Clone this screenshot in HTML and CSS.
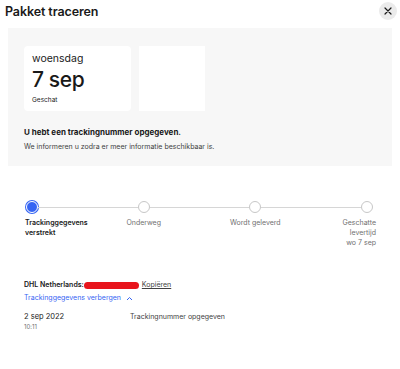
FILE: index.html
```html
<!DOCTYPE html>
<html>
<head>
<meta charset="utf-8">
<link rel="stylesheet" href="styles.css">
</head>
<body>
<div class="dialog">
  <header class="head">
    <h1 class="title">Pakket traceren</h1>
    <button class="close" aria-label="Sluiten">
      <svg width="8" height="8" viewBox="0 0 8 8"><path d="M1 1L7 7M7 1L1 7" stroke="#191919" stroke-width="1.2" stroke-linecap="round"/></svg>
    </button>
  </header>
  <section class="panel">
    <div class="cards">
      <div class="card card-date">
        <div class="day">woensdag</div>
        <div class="date">7 sep</div>
        <div class="est">Geschat</div>
      </div>
      <div class="card card-empty"></div>
    </div>
    <div class="status">U hebt een trackingnummer opgegeven.</div>
    <div class="info">We informeren u zodra er meer informatie beschikbaar is.</div>
  </section>
  <section class="stepper">
    <div class="step step-first">
      <span class="dot dot-active"></span>
      <span class="label label-active">Trackinggegevens<br>verstrekt</span>
    </div>
    <span class="line"></span>
    <div class="step">
      <span class="dot"></span>
      <span class="label">Onderweg</span>
    </div>
    <span class="line"></span>
    <div class="step">
      <span class="dot"></span>
      <span class="label">Wordt geleverd</span>
    </div>
    <span class="line"></span>
    <div class="step step-last">
      <span class="dot"></span>
      <span class="label">Geschatte<br>levertijd<br>wo 7 sep</span>
    </div>
  </section>
  <section class="tracking">
    <div class="carrier"><b>DHL Netherlands:</b><span class="redact"></span><a class="copy">Kopiëren</a></div>
    <a class="toggle">Trackinggegevens verbergen
      <svg width="7" height="5" viewBox="0 0 7 5"><path d="M1 4L3.5 1.5L6 4" fill="none" stroke="#3665f3" stroke-width="1"/></svg>
    </a>
    <div class="event">
      <div class="when">
        <div class="edate">2 sep 2022</div>
        <div class="etime">10:11</div>
      </div>
      <div class="what">Trackingnummer opgegeven</div>
    </div>
  </section>
</div>
</body>
</html>
```
FILE: styles.css
```css
* { box-sizing: border-box; }
html, body { margin: 0; padding: 0; background: #fff; }
body {
  width: 400px;
  height: 369px;
  overflow: hidden;
  font-family: Inter, "Noto Sans", sans-serif;
  color: #191919;
}
.head {
  height: 28px;
  display: flex;
  align-items: center;
  justify-content: space-between;
  padding: 0 3px 6px 5px;
}
.title {
  margin: 0;
  font-size: 12.5px;
  font-weight: 600;
  letter-spacing: -0.1px;
}
.close {
  width: 18px;
  height: 18px;
  border-radius: 50%;
  border: none;
  background: #ebebeb;
  padding: 0;
  display: flex;
  align-items: center;
  justify-content: center;
}
.panel {
  margin: 0 8px;
  height: 138px;
  background: #f7f7f7;
  padding: 18px 16px 0;
}
.cards {
  display: flex;
  gap: 8px;
}
.card {
  background: #fff;
  height: 65px;
}
.card-date {
  width: 107px;
  border-radius: 4px;
  padding: 6px 8px;
}
.card-empty { width: 66px; }
.day { font-size: 10.5px; line-height: 13px; }
.date { font-size: 21px; font-weight: 500; line-height: 26px; margin-top: 2px; letter-spacing: -0.4px; }
.est { font-size: 6.5px; line-height: 9px; margin-top: 3px; }
.status {
  margin-top: 16px;
  font-size: 8px;
  font-weight: 700;
  line-height: 11px;
}
.info {
  margin-top: 4px;
  font-size: 7px;
  line-height: 10px;
  color: #414141;
}
.stepper {
  display: flex;
  margin: 35px 27px 0 26px;
  height: 79px;
}
.step {
  width: 12px;
  flex: none;
  display: flex;
  flex-direction: column;
  align-items: center;
}
.step-first { align-items: flex-start; }
.step-last { align-items: flex-end; }
.dot {
  width: 12px;
  height: 12px;
  border-radius: 50%;
  border: 1px solid #c7c7c7;
  background: #fff;
  flex: none;
}
.dot-active {
  background: #3665f3;
  border: 1.5px solid #fff;
  box-shadow: 0 0 0 1px #3665f3;
}
.line {
  flex: 1;
  height: 1px;
  background: #d6d6d6;
  margin-top: 5.5px;
}
.label {
  margin-top: 5px;
  font-size: 7px;
  line-height: 10px;
  white-space: nowrap;
  color: #707070;
}
.step-first .label { margin-left: -1px; }
.step-last .label { text-align: right; margin-right: -3px; }
.label-active { color: #191919; font-weight: 600; }
.tracking {
  padding: 0 24px;
  font-size: 7px;
  line-height: 10px;
}
.carrier {
  display: flex;
  align-items: center;
}
.carrier b { font-weight: 600; }
.redact {
  display: inline-block;
  width: 55px;
  height: 7px;
  border-radius: 4px;
  background: #e8141c;
  margin: 0 3px 0 0;
}
.copy {
  text-decoration: underline;
  color: #414141;
}
.toggle {
  display: flex;
  align-items: center;
  gap: 5px;
  margin-top: 3px;
  color: #3665f3;
}
.event {
  display: flex;
  margin-top: 9px;
}
.when { width: 106px; }
.edate { font-size: 7.5px; line-height: 10px; }
.etime { font-size: 6px; line-height: 10px; color: #707070; }
.what { font-size: 7px; line-height: 10px; color: #414141; }
```
